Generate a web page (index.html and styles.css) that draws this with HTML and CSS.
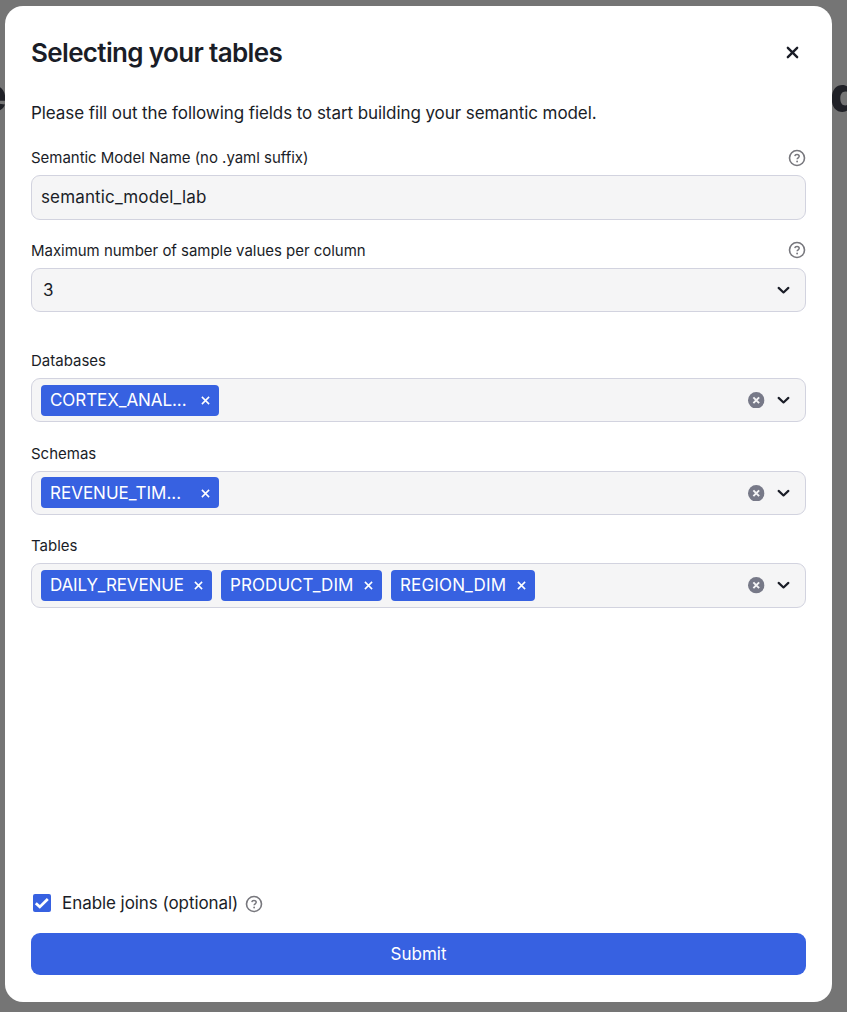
FILE: index.html
```html
<!DOCTYPE html>
<html lang="en">
<head>
<meta charset="utf-8">
<title>Selecting your tables</title>
<link rel="stylesheet" href="styles.css">
</head>
<body>
<svg class="defs" aria-hidden="true">
  <symbol id="help" viewBox="0 0 18 18"><circle cx="9" cy="9" r="7.5" fill="none" stroke="currentColor" stroke-width="1.6"/><path d="M6.8 7.2C7 6 7.9 5.5 9 5.5c1.3 0 2.2.8 2.2 1.8 0 1.5-2 1.5-2.1 3" fill="none" stroke="currentColor" stroke-width="1.5"/><circle cx="9.1" cy="12.5" r=".9" fill="currentColor"/></symbol>
  <symbol id="chevron" viewBox="0 0 12 8"><path d="M1.5 1.6 6 5.8l4.5-4.2" fill="none" stroke="currentColor" stroke-width="2" stroke-linecap="round" stroke-linejoin="round"/></symbol>
  <symbol id="clear" viewBox="0 0 16 16"><circle cx="8" cy="8" r="8" fill="currentColor"/><path d="M5.2 5.2l5.6 5.6M10.8 5.2l-5.6 5.6" stroke="#f4f4f5" stroke-width="1.9"/></symbol>
  <symbol id="cross" viewBox="0 0 10 10"><path d="M1 1l8 8M9 1L1 9" stroke="currentColor" stroke-width="1.7"/></symbol>
</svg>
<div class="backdrop" aria-hidden="true"><span class="behind behind-left">e</span><span class="behind behind-right">d</span></div>
<main class="modal">
  <header class="head">
    <h1 class="title">Selecting your tables</h1>
    <button class="close" aria-label="Close"><svg viewBox="0 0 12 12"><path d="M1.7 1.7l8.6 8.6M10.3 1.7l-8.6 8.6" stroke="currentColor" stroke-width="2.2" stroke-linecap="round"/></svg></button>
  </header>
  <p class="intro">Please fill out the following fields to start building your semantic model.</p>

  <section class="field name">
    <div class="label"><span class="label-text">Semantic Model Name (no .yaml suffix)</span><svg class="help"><use href="#help"/></svg></div>
    <div class="box tall"><span class="value">semantic_model_lab</span></div>
  </section>
  <section class="field samples">
    <div class="label"><span class="label-text">Maximum number of sample values per column</span><svg class="help"><use href="#help"/></svg></div>
    <div class="box"><span class="value number">3</span><svg class="chevron"><use href="#chevron"/></svg></div>
  </section>
  <section class="field databases">
    <div class="label"><span>Databases</span></div>
    <div class="box"><div class="tags"><span class="tag fixed"><span>CORTEX_ANAL...</span><svg class="cross"><use href="#cross"/></svg></span></div><svg class="clear"><use href="#clear"/></svg><svg class="chevron"><use href="#chevron"/></svg></div>
  </section>
  <section class="field schemas">
    <div class="label"><span>Schemas</span></div>
    <div class="box"><div class="tags"><span class="tag fixed"><span>REVENUE_TIM...</span><svg class="cross"><use href="#cross"/></svg></span></div><svg class="clear"><use href="#clear"/></svg><svg class="chevron"><use href="#chevron"/></svg></div>
  </section>
  <section class="field tables">
    <div class="label"><span>Tables</span></div>
    <div class="box tall"><div class="tags"><span class="tag daily"><span>DAILY_REVENUE</span><svg class="cross"><use href="#cross"/></svg></span><span class="tag product"><span>PRODUCT_DIM</span><svg class="cross"><use href="#cross"/></svg></span><span class="tag region"><span>REGION_DIM</span><svg class="cross"><use href="#cross"/></svg></span></div><svg class="clear"><use href="#clear"/></svg><svg class="chevron"><use href="#chevron"/></svg></div>
  </section>

  <footer class="foot">
    <div class="joins">
      <span class="check"><svg viewBox="0 0 18 18"><path d="M2.8 9.2l4 3.7 8-7.8" fill="none" stroke="#fff" stroke-width="2.8"/></svg></span>
      <span class="joins-text">Enable joins (optional)</span>
      <svg class="help"><use href="#help"/></svg>
    </div>
    <button class="submit">Submit</button>
  </footer>
</main>
</body>
</html>
```
FILE: styles.css
```css
* { box-sizing: border-box; }
body {
  margin: 0;
  height: 1012px;
  padding: 6px 15px 10px 5px;
  overflow: hidden;
  background: #757575;
  color: #1a1d27;
  font-family: Inter, sans-serif;
  font-size: 17px;
}
svg { display: block; flex: none; }
.defs { position: absolute; width: 0; height: 0; }
.behind {
  position: absolute;
  top: 65px;
  font-size: 49px;
  line-height: 60px;
  font-weight: 800;
  color: #202127;
}
.behind-left { right: 840px; }
.behind-right { left: 830px; }
.modal {
  position: relative;
  display: flex;
  flex-direction: column;
  height: 996px;
  padding: 26px 26px 27px;
  border-radius: 18px;
  background: #fff;
}
.head { display: flex; justify-content: space-between; height: 42px; align-items: center; }
.title { margin: 0; font-size: 26px; line-height: 32px; font-weight: 600; letter-spacing: -0.65px; }
.close { padding: 0 0 2px; margin-right: 7px; border: 0; background: none; color: #1a1d27; }
.close svg { width: 13px; height: 13px; }
.intro { margin: 26px 0 20px; line-height: 26px; letter-spacing: -0.075px; }
.label {
  display: flex;
  justify-content: space-between;
  align-items: center;
  height: 23px;
  margin-bottom: 6px;
  font-size: 15px;
}
.label-text { letter-spacing: -0.03px; }
.help { width: 18px; height: 18px; color: #77777d; }
.samples .help { margin-bottom: 2px; }
.box {
  display: flex;
  align-items: center;
  height: 44px;
  padding: 0 15.5px 0 9px;
  border: 1px solid #d2d3df;
  border-radius: 9px;
  background: #f5f5f6;
}
.tall { height: 45px; }
.field { margin-bottom: 20px; }
.name, .schemas { margin-bottom: 19px; }
.samples { margin-bottom: 37px; }
.value { flex: 1; padding-bottom: 1px; letter-spacing: 0.14px; }
.number { padding-left: 2px; }
.chevron { width: 13px; height: 9px; }
.clear { width: 16.5px; height: 16.5px; margin-right: 12px; color: #777988; }
.tags { display: flex; flex: 1; gap: 9px; }
.schemas .tags, .tables .tags { padding-bottom: 1px; }
.tag {
  display: flex;
  align-items: center;
  justify-content: space-between;
  height: 31px;
  padding: 0 9.5px 0 9px;
  border-radius: 4px;
  background: #3761e1;
  color: #fff;
}
.tag > span { margin-top: -1px; }
.schemas .tag > span { margin-top: 1px; }
.fixed { width: 178px; }
.databases .fixed { letter-spacing: -0.07px; }
.daily { width: 171px; letter-spacing: -0.15px; }
.product { width: 161px; letter-spacing: 0.08px; }
.region { width: 144px; letter-spacing: 0.15px; }
.cross { width: 9px; height: 9px; margin-top: 1px; }
.foot { margin-top: auto; }
.joins { display: flex; align-items: center; height: 26px; margin-bottom: 17px; padding-left: 2px; }
.joins-text { letter-spacing: -0.06px; }
.check { width: 18px; height: 18px; margin-right: 11px; border-radius: 2px; background: #3761e1; }
.joins .help { margin: 1px 0 0 7px; }
.submit {
  display: block;
  width: 100%;
  height: 42px;
  border: 0;
  border-radius: 9px;
  background: #3761e1;
  color: #fff;
  font: 400 17px Inter, sans-serif;
}
```
